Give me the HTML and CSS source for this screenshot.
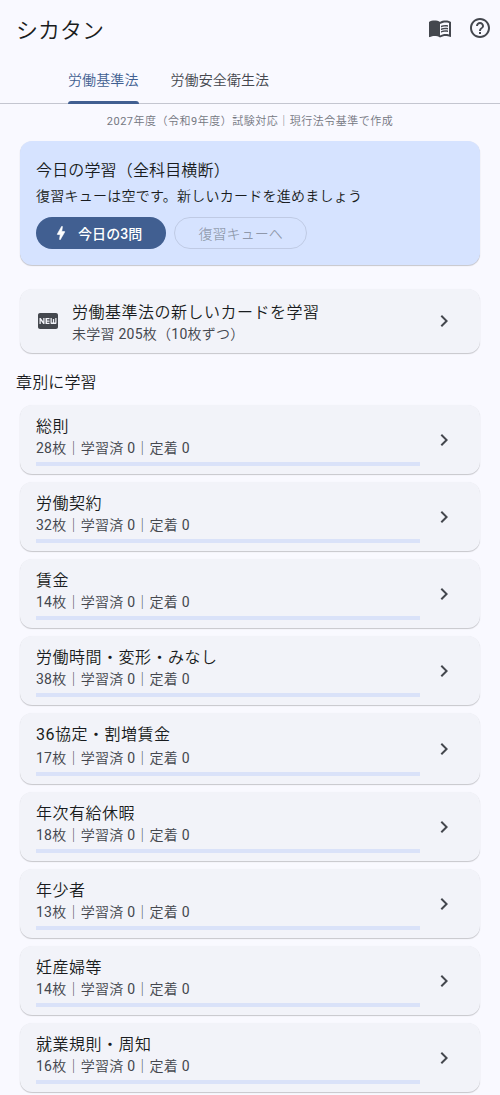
FILE: index.html
```html
<!DOCTYPE html>
<html lang="ja">
<head>
<meta charset="utf-8">
<title>シカタン</title>
<link rel="stylesheet" href="styles.css">
</head>
<body>
<svg class="defs" aria-hidden="true">
  <symbol id="chevron" viewBox="0 0 24 24"><path d="M10 6 8.59 7.41 13.17 12l-4.58 4.59L10 18l6-6z"/></symbol>
</svg>
<header class="appbar">
  <h1>シカタン</h1>
  <svg class="icon book" viewBox="0 0 24 24"><path d="M21 5c-1.11-.35-2.33-.5-3.5-.5-1.95 0-4.05.4-5.5 1.5-1.45-1.1-3.55-1.5-5.5-1.5S2.45 4.9 1 6v14.65c0 .25.25.5.5.5.1 0 .15-.05.25-.05C3.1 20.45 5.05 20 6.5 20c1.95 0 4.05.4 5.5 1.5 1.35-.85 3.8-1.5 5.5-1.5 1.65 0 3.35.3 4.75 1.05.1.05.15.05.25.05.25 0 .5-.25.5-.5V6c-.6-.45-1.25-.75-2-1zm0 13.5c-1.1-.35-2.3-.5-3.5-.5-1.7 0-4.15.65-5.5 1.5V8c1.35-.85 3.8-1.5 5.5-1.5 1.2 0 2.4.15 3.5.5v11.5z"/><path d="M17.5 10.5c.88 0 1.73.09 2.5.26V9.24c-.79-.15-1.64-.24-2.5-.24-1.7 0-3.24.29-4.5.83v1.66c1.13-.64 2.7-.99 4.5-.99zM13 12.49v1.66c1.13-.64 2.7-.99 4.5-.99.88 0 1.73.09 2.5.26V11.9c-.79-.15-1.64-.24-2.5-.24-1.7 0-3.24.3-4.5.83zM17.5 14.33c-1.7 0-3.24.29-4.5.83v1.66c1.13-.64 2.7-.99 4.5-.99.88 0 1.73.09 2.5.26v-1.52c-.79-.16-1.64-.24-2.5-.24z"/></svg>
  <svg class="icon" viewBox="0 0 24 24"><path d="M11 18h2v-2h-2v2zm1-16C6.48 2 2 6.48 2 12s4.48 10 10 10 10-4.48 10-10S17.52 2 12 2zm0 18c-4.41 0-8-3.59-8-8s3.59-8 8-8 8 3.59 8 8-3.59 8-8 8zm0-14c-2.21 0-4 1.79-4 4h2c0-1.1.9-2 2-2s2 .9 2 2c0 2-3 1.75-3 5h2c0-2.25 3-2.5 3-5 0-2.21-1.79-4-4-4z"/></svg>
</header>
<nav class="tabs">
  <a class="tab active">労働基準法</a>
  <a class="tab">労働安全衛生法</a>
</nav>
<p class="notice">2027年度（令和9年度）試験対応｜現行法令基準で作成</p>
<main>
  <section class="card today">
    <h2>今日の学習（全科目横断）</h2>
    <p>復習キューは空です。新しいカードを進めましょう</p>
    <div class="actions">
      <button class="btn filled"><svg viewBox="0 0 24 24"><path d="M10.67 21c-.35 0-.62-.31-.57-.66L11 14H7.5c-.88 0-.33-.75-.31-.78 1.26-2.23 3.15-5.53 5.65-9.93.1-.18.3-.29.5-.29.35 0 .62.31.57.66l-.9 6.34h3.51c.4 0 .62.19.4.66-3.29 5.74-5.2 9.09-5.75 10.05-.1.18-.29.29-.5.29z"/></svg>今日の3問</button>
      <button class="btn outlined" disabled>復習キューへ</button>
    </div>
  </section>
  <section class="card fresh">
    <svg class="new" viewBox="0 0 24 24"><path d="M20 4H4c-1.11 0-1.99.89-1.99 2L2 18c0 1.11.89 2 2 2h16c1.11 0 2-.89 2-2V6c0-1.11-.89-2-2-2zM8.5 15H7.3l-2.55-3.5V15H3.5V9h1.25l2.5 3.5V9H8.5v6zm5-4.74H11v1.12h2.5v1.26H11v1.11h2.5V15h-4V9h4v1.26zm7 3.74c0 .55-.45 1-1 1h-4c-.55 0-1-.45-1-1V9h1.25v4.51h1.13V9.99h1.25v3.51h1.12V9h1.25v5z"/></svg>
    <div class="text"><h3>労働基準法の新しいカードを学習</h3><p>未学習 205枚（10枚ずつ）</p></div>
    <svg class="chevron"><use href="#chevron"/></svg>
  </section>
  <h2 class="heading">章別に学習</h2>
  <div class="chapters">
    <article class="card row"><div class="text"><h3>総則</h3><p>28枚｜学習済 0｜定着 0</p><div class="bar"></div></div><svg class="chevron"><use href="#chevron"/></svg></article>
    <article class="card row"><div class="text"><h3>労働契約</h3><p>32枚｜学習済 0｜定着 0</p><div class="bar"></div></div><svg class="chevron"><use href="#chevron"/></svg></article>
    <article class="card row"><div class="text"><h3>賃金</h3><p>14枚｜学習済 0｜定着 0</p><div class="bar"></div></div><svg class="chevron"><use href="#chevron"/></svg></article>
    <article class="card row"><div class="text"><h3>労働時間・変形・みなし</h3><p>38枚｜学習済 0｜定着 0</p><div class="bar"></div></div><svg class="chevron"><use href="#chevron"/></svg></article>
    <article class="card row mixed"><div class="text"><h3>36協定・割増賃金</h3><p>17枚｜学習済 0｜定着 0</p><div class="bar"></div></div><svg class="chevron"><use href="#chevron"/></svg></article>
    <article class="card row"><div class="text"><h3>年次有給休暇</h3><p>18枚｜学習済 0｜定着 0</p><div class="bar"></div></div><svg class="chevron"><use href="#chevron"/></svg></article>
    <article class="card row"><div class="text"><h3>年少者</h3><p>13枚｜学習済 0｜定着 0</p><div class="bar"></div></div><svg class="chevron"><use href="#chevron"/></svg></article>
    <article class="card row"><div class="text"><h3>妊産婦等</h3><p>14枚｜学習済 0｜定着 0</p><div class="bar"></div></div><svg class="chevron"><use href="#chevron"/></svg></article>
    <article class="card row"><div class="text"><h3>就業規則・周知</h3><p>16枚｜学習済 0｜定着 0</p><div class="bar"></div></div><svg class="chevron"><use href="#chevron"/></svg></article>
  </div>
</main>
</body>
</html>
```
FILE: styles.css
```css
* { box-sizing: border-box; }
html, body { height: 1095px; overflow: hidden; }
body {
  margin: 0;
  background: #f9f9ff;
  color: #191c20;
  font-family: Roboto, "Noto Sans CJK JP DemiLight", "Noto Sans CJK JP", sans-serif;
  font-weight: 400;
}
h1, h2, h3, p { margin: 0; font-weight: inherit; white-space: nowrap; }
.defs { display: none; }
svg { flex: none; fill: #44474e; }

.appbar { display: flex; align-items: center; height: 56px; padding: 0 8px 0 16px; }
.appbar h1 { flex: 1; font-size: 22px; line-height: 28px; padding-top: 5px; }
.icon { width: 24px; height: 24px; }
.book { margin-right: 16px; }

.tabs { display: flex; height: 48px; padding-left: 52px; border-bottom: 1px solid #c4c6d0; }
.tab {
  display: flex;
  flex-direction: column;
  height: 48px;
  margin: 0 16px;
  line-height: 48px;
  font-size: 14px;
  letter-spacing: .1px;
  color: #44474e;
}
.tab.active { color: #415f91; }
.tab.active::after {
  content: "";
  height: 3px;
  margin-top: -3px;
  border-radius: 3px 3px 0 0;
  background: #415f91;
}
.notice {
  padding-top: 10px;
  text-align: center;
  font-size: 11px;
  line-height: 16px;
  letter-spacing: .5px;
  color: #74777f;
}

main { padding: 11px 20px 0; }
.card {
  border-radius: 12px;
  background: #f2f3f9;
  box-shadow: 0 1px 1px rgba(0, 0, 0, .2), 0 0 1px rgba(0, 0, 0, .06);
}
.today { height: 124px; padding: 18px 16px 16px; background: #d6e3ff; }
.today h2 { font-size: 16px; line-height: 24px; letter-spacing: .15px; }
.today p { margin-top: 3px; font-size: 14px; line-height: 20px; letter-spacing: .25px; }
.actions { display: flex; gap: 8px; margin-top: 11px; }
.btn {
  display: flex;
  align-items: center;
  height: 32px;
  border: 0;
  border-radius: 16px;
  font: inherit;
  font-size: 14px;
  letter-spacing: .1px;
}
.filled {
  width: 130.4px;
  padding: 0 0 0 16px;
  gap: 8px;
  background: #415f91;
  color: #fff;
  font-family: Roboto, "Noto Sans CJK JP Regular", "Noto Sans CJK JP", sans-serif;
  font-weight: 500;
}
.filled svg { width: 18px; height: 18px; fill: #fff; stroke: #fff; stroke-width: .8; }
.outlined {
  width: 132.6px;
  justify-content: center;
  padding: 0;
  background: none;
  border: 1px solid rgba(25, 28, 32, .12);
  color: rgba(25, 28, 32, .38);
}

.fresh { display: flex; align-items: center; height: 64px; margin-top: 24px; padding: 0 24px 0 16px; }
.fresh .text { padding-top: 4px; }
.fresh h3 { line-height: 22px; }
.new { width: 24px; height: 24px; margin-right: 12px; }
.text { flex: 1; }
.text h3 { font-size: 16px; letter-spacing: .5px; }
.text p { font-size: 14px; line-height: 20px; letter-spacing: .25px; color: #44474e; }
.chevron { width: 24px; height: 24px; }

.heading { margin: 18px 0 10px -4px; font-size: 16px; line-height: 24px; letter-spacing: .15px; }
.chapters { display: flex; flex-direction: column; gap: 8px; }
.row { display: flex; align-items: center; height: 69px; padding: 1px 24px 0 16px; }
.row h3 { padding-top: 2px; line-height: 22px; }
.row .chevron { margin-left: 12px; }
.bar { height: 4px; margin-top: 4px; background: #dae2f9; }
.mixed { height: 71px; }
.mixed p { padding-top: 2px; }
```
